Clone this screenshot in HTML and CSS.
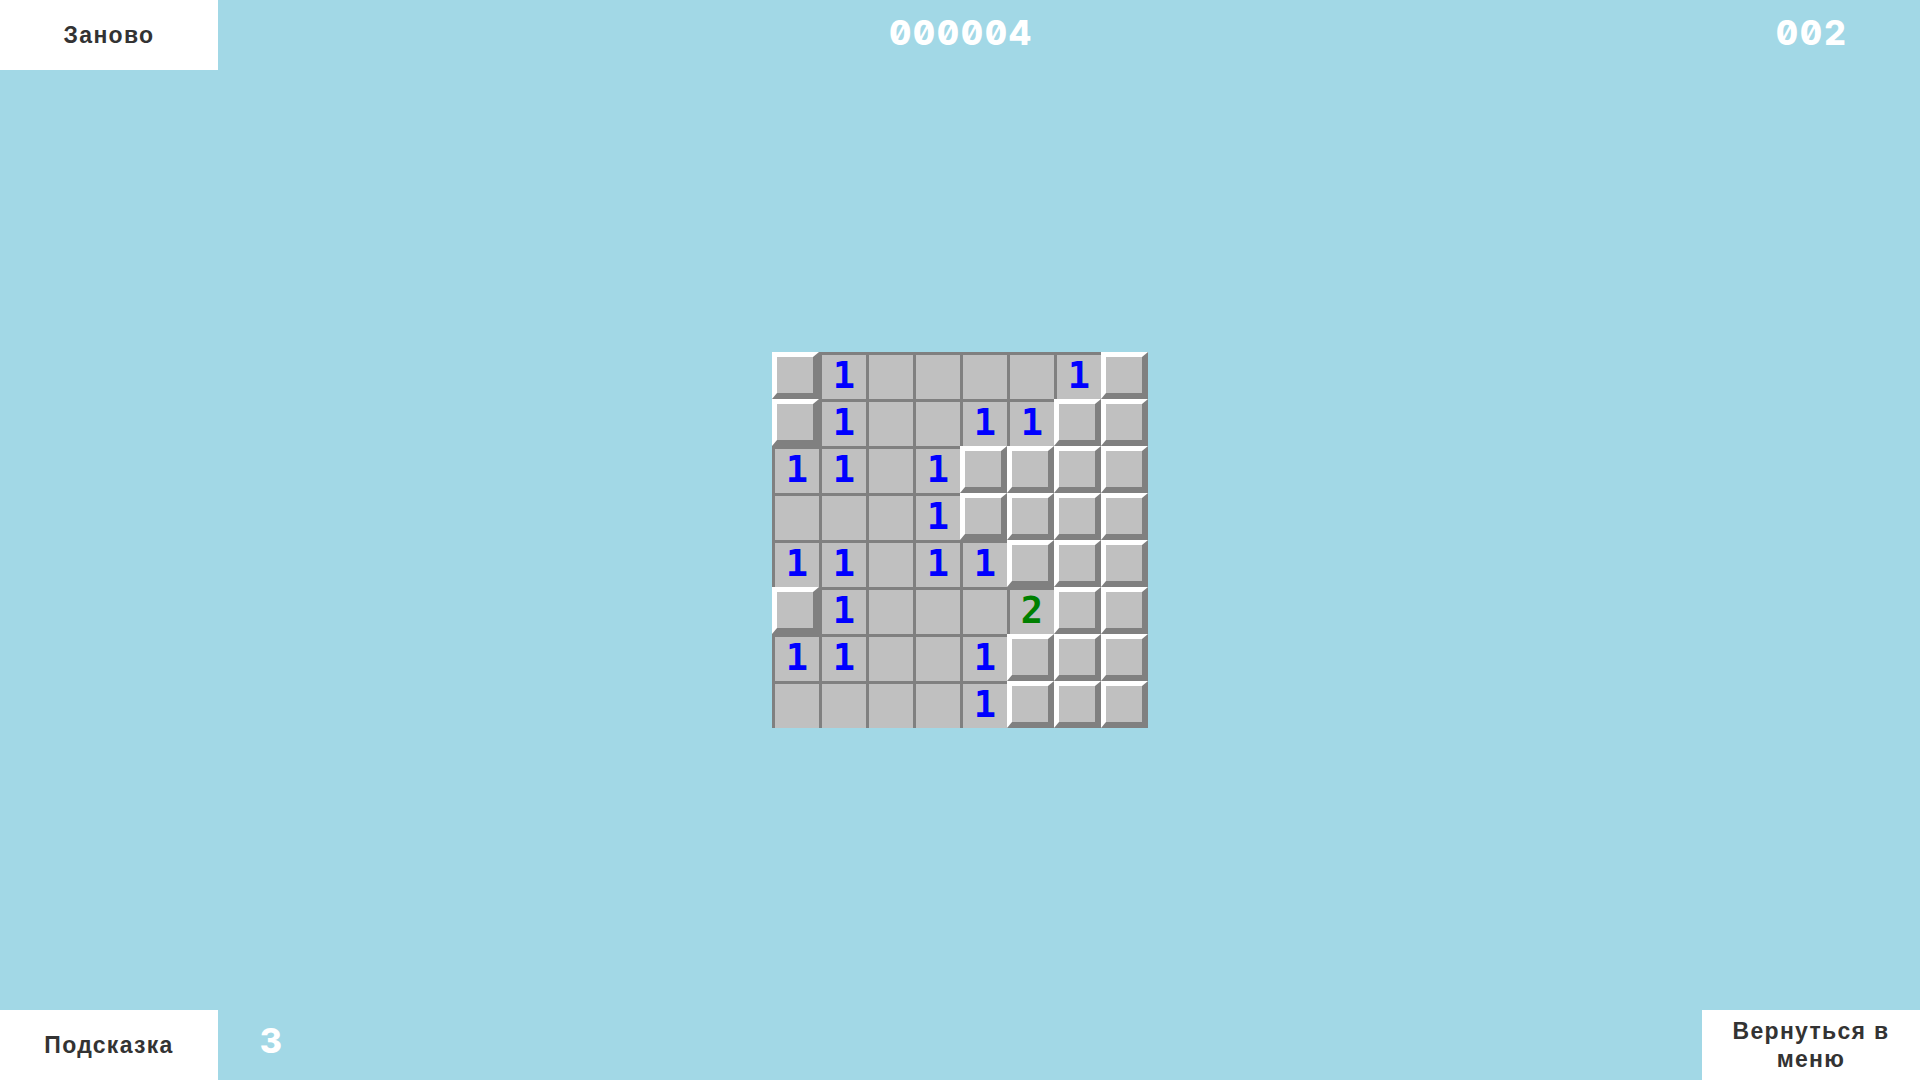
FILE: index.html
```html
<!DOCTYPE html>
<html lang="ru">
<head>
<meta charset="utf-8">
<title>Сапёр</title>
<link rel="stylesheet" href="styles.css">
</head>
<body>
<div class="app">
  <header class="topbar">
    <button class="btn btn-top">Заново</button>
    <div class="counter">000004</div>
    <div class="counter">002</div>
  </header>
  <main class="field">
    <div class="board">
      <div class="cell closed"></div><div class="cell open n1">1</div><div class="cell open"></div><div class="cell open"></div><div class="cell open"></div><div class="cell open"></div><div class="cell open n1">1</div><div class="cell closed"></div>
      <div class="cell closed"></div><div class="cell open n1">1</div><div class="cell open"></div><div class="cell open"></div><div class="cell open n1">1</div><div class="cell open n1">1</div><div class="cell closed"></div><div class="cell closed"></div>
      <div class="cell open n1">1</div><div class="cell open n1">1</div><div class="cell open"></div><div class="cell open n1">1</div><div class="cell closed"></div><div class="cell closed"></div><div class="cell closed"></div><div class="cell closed"></div>
      <div class="cell open"></div><div class="cell open"></div><div class="cell open"></div><div class="cell open n1">1</div><div class="cell closed"></div><div class="cell closed"></div><div class="cell closed"></div><div class="cell closed"></div>
      <div class="cell open n1">1</div><div class="cell open n1">1</div><div class="cell open"></div><div class="cell open n1">1</div><div class="cell open n1">1</div><div class="cell closed"></div><div class="cell closed"></div><div class="cell closed"></div>
      <div class="cell closed"></div><div class="cell open n1">1</div><div class="cell open"></div><div class="cell open"></div><div class="cell open"></div><div class="cell open n2">2</div><div class="cell closed"></div><div class="cell closed"></div>
      <div class="cell open n1">1</div><div class="cell open n1">1</div><div class="cell open"></div><div class="cell open"></div><div class="cell open n1">1</div><div class="cell closed"></div><div class="cell closed"></div><div class="cell closed"></div>
      <div class="cell open"></div><div class="cell open"></div><div class="cell open"></div><div class="cell open"></div><div class="cell open n1">1</div><div class="cell closed"></div><div class="cell closed"></div><div class="cell closed"></div>
    </div>
  </main>
  <footer class="bottombar">
    <div class="hint-group">
      <button class="btn">Подсказка</button>
      <div class="counter hints">3</div>
    </div>
    <button class="btn btn-menu">Вернуться в меню</button>
  </footer>
</div>
</body>
</html>
```

FILE: styles.css
```css
* { box-sizing: border-box; }

html, body {
  margin: 0;
  padding: 0;
  width: 100%;
  height: 100%;
  overflow: hidden;
}

body {
  background: #a2d8e6;
  font-family: "Liberation Sans", Arial, sans-serif;
}

.app {
  width: 1920px;
  height: 1080px;
  display: flex;
  flex-direction: column;
}

.topbar {
  height: 70px;
  display: grid;
  grid-template-columns: 218px 1fr 218px;
  align-items: center;
}

.btn {
  background: #ffffff;
  border: none;
  margin: 0;
  padding: 0 18px;
  width: 218px;
  height: 70px;
  color: #333333;
  font-family: "Liberation Sans", Arial, sans-serif;
  font-weight: bold;
  font-size: 23px;
  letter-spacing: 1.3px;
  line-height: 28px;
  text-align: center;
  cursor: pointer;
}

.counter {
  color: #ffffff;
  font-family: Inter, "DejaVu Sans Mono", monospace;
  font-weight: 800;
  font-size: 34px;
  letter-spacing: 2px;
  font-feature-settings: "zero" 1, "tnum" 1;
  text-align: center;
  line-height: 1;
  padding-left: 2px;
  padding-bottom: 4px;
}

.field {
  flex: 1;
  display: flex;
  align-items: center;
  justify-content: center;
}

.board {
  display: grid;
  grid-template-columns: repeat(8, 47px);
  grid-template-rows: repeat(8, 47px);
}

.cell {
  width: 47px;
  height: 47px;
  background: #c0c0c0;
  display: flex;
  align-items: center;
  justify-content: center;
  font-family: "DejaVu Sans Mono", monospace;
  font-weight: bold;
  font-size: 37px;
  line-height: 1;
}

.closed {
  border-style: solid;
  border-width: 5px 6px 6px 5px;
  border-color: #ffffff #808080 #808080 #ffffff;
}

.open {
  border-top: 3px solid #808080;
  border-left: 3px solid #808080;
  padding-bottom: 3px;
}

.n1 { color: #0000ff; }
.n2 { color: #008000; }

.bottombar {
  height: 70px;
  display: flex;
  justify-content: space-between;
  align-items: stretch;
}

.hint-group {
  display: flex;
  align-items: center;
}

.hints {
  margin-left: 40px;
  padding-bottom: 8px;
}

.btn-menu {
  padding: 0 22px;
}
```
